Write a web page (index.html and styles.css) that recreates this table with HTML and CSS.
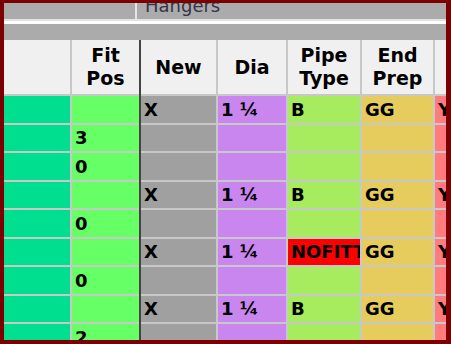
FILE: index.html
```html
<!DOCTYPE html>
<html lang="en">
<head>
  <meta charset="UTF-8">
  <meta name="viewport" content="width=device-width, initial-scale=1.0">
  <title>Hangers</title>
  <link rel="stylesheet" href="styles.css">
</head>
<body>
  <div class="frame">
    <div class="tabs">
      <div class="tab-blank"></div>
      <div class="tab-title">Hangers</div>
    </div>
    <div class="toolbar"></div>

    <div class="sheet">
      <div class="pane frozen" id="frozen">
        <div class="head"></div>
        <div class="head">Fit<br>Pos</div>
      </div>
      <div class="pane scroll" id="scroll">
        <div class="head">New</div>
        <div class="head">Dia</div>
        <div class="head">Pipe<br>Type</div>
        <div class="head">End<br>Prep</div>
        <div class="head"></div>
      </div>
    </div>
  </div>

  <script>
    const spool = ['X', '1 \u00bc', 'B', 'GG', 'Y'];
    const rows = [
      { fit: '', cells: spool },
      { fit: '3' },
      { fit: '0' },
      { fit: '', cells: spool },
      { fit: '0' },
      { fit: '', cells: ['X', '1 \u00bc', 'NOFITTING', 'GG', 'Y'] },
      { fit: '0' },
      { fit: '', cells: spool },
      { fit: '2' }
    ];
    const columns = ['new', 'dia', 'pipe', 'prep', 'weld'];

    function addCell(parent, cls, text) {
      const cell = document.createElement('div');
      cell.className = 'cell ' + cls;
      cell.textContent = text || '';
      parent.appendChild(cell);
    }

    function renderRows() {
      const frozen = document.getElementById('frozen');
      const scroll = document.getElementById('scroll');
      rows.forEach(row => {
        addCell(frozen, 'spool', '');
        addCell(frozen, 'fit', row.fit);
        columns.forEach((col, i) => {
          const text = row.cells ? row.cells[i] : '';
          const cls = text === 'NOFITTING' ? col + ' nofit' : col;
          addCell(scroll, cls, text);
        });
      });
    }

    renderRows();
  </script>
</body>
</html>
```

FILE: styles.css
```css
body {
  margin: 0;
  font-family: "DejaVu Sans", Verdana, sans-serif;
  color: #000;
}
.frame {
  width: 442px;
  height: 337px;
  border: solid #7c0000;
  border-width: 3px 5px 4px 4px;
  background: #ababab;
  overflow: hidden;
}
.tabs {
  display: flex;
  height: 16px;
  background: #ababab;
  border-bottom: 2px solid #e2e2e2;
  overflow: hidden;
}
.tab-blank {
  width: 131px;
  border-right: 2px solid #e6e6e6;
}
.tab-title {
  padding-left: 8px;
  margin-top: -4px;
  font-size: 18px;
  line-height: 14px;
  color: #34344a;
}
.toolbar {
  height: 16px;
  border-top: 3px solid #fff;
  background: #ababab;
}
.sheet {
  display: flex;
  align-items: flex-start;
}
.pane {
  display: grid;
  gap: 2px;
  flex: none;
  background: #c8c8c8;
  grid-template-rows: 54px;
  grid-auto-rows: 26.5px;
}
.frozen {
  grid-template-columns: 66px 67px;
  border-right: 2px solid #444;
}
.scroll {
  grid-template-columns: 75px 68px 72px 71px 60px;
}
.head {
  display: flex;
  align-items: center;
  justify-content: center;
  text-align: center;
  background: #f0f0f0;
  font-size: 19px;
  font-weight: bold;
  line-height: 23px;
}
.cell {
  display: flex;
  align-items: center;
  padding: 0 3px;
  font-size: 18px;
  font-weight: bold;
  white-space: nowrap;
  overflow: hidden;
}
.spool { background: #00df90; }
.fit { background: #66ff66; }
.new { background: #a0a0a0; }
.dia { background: #c986ef; }
.pipe { background: #a6ec5e; }
.prep { background: #e6cc5c; }
.weld { background: #ff7b7e; }
.pipe.nofit { background: #ff0000; }
```
